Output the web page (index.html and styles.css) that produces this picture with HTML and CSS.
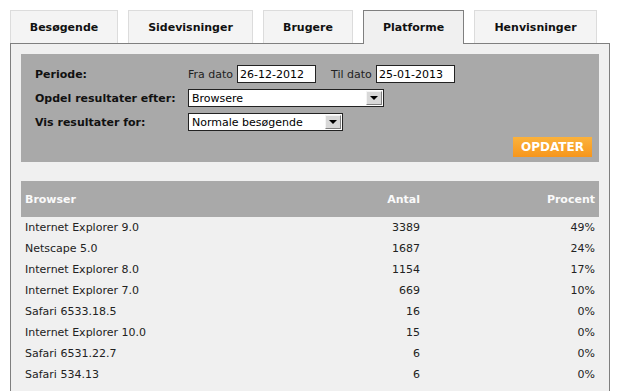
FILE: index.html
```html
<!DOCTYPE html>
<html lang="da">
<head>
    <meta charset="UTF-8">
    <meta name="viewport" content="width=device-width, initial-scale=1.0">
    <title>Statistik - Platforme</title>
    <link rel="stylesheet" href="styles.css">
</head>
<body>
    <div class="page">
        <div class="tabs">
            <a class="tab tab-visitors" href="#">Besøgende</a>
            <a class="tab tab-pageviews" href="#">Sidevisninger</a>
            <a class="tab tab-users" href="#">Brugere</a>
            <a class="tab tab-platforms active" href="#">Platforme</a>
            <a class="tab tab-referrers" href="#">Henvisninger</a>
        </div>

        <div class="panel">
            <form class="filter">
                <div class="filter-row">
                    <label class="filter-label">Periode:</label>
                    <div class="filter-field">
                        <span class="date-label">Fra dato</span>
                        <input class="date-input" type="text" value="26-12-2012">
                        <span class="date-label date-label-to">Til dato</span>
                        <input class="date-input" type="text" value="25-01-2013">
                    </div>
                </div>
                <div class="filter-row">
                    <label class="filter-label">Opdel resultater efter:</label>
                    <div class="select select-wide">
                        <span class="select-value">Browsere</span>
                        <span class="select-arrow"></span>
                    </div>
                </div>
                <div class="filter-row">
                    <label class="filter-label">Vis resultater for:</label>
                    <div class="select select-narrow">
                        <span class="select-value">Normale besøgende</span>
                        <span class="select-arrow"></span>
                    </div>
                </div>
                <div class="filter-actions">
                    <button class="update-button" type="button">OPDATER</button>
                </div>
            </form>

            <table class="stats">
                <thead>
                    <tr>
                        <th class="col-name">Browser</th>
                        <th class="col-num">Antal</th>
                        <th class="col-pct">Procent</th>
                    </tr>
                </thead>
                <tbody>
                    <tr><td>Internet Explorer 9.0</td><td class="num">3389</td><td class="num">49%</td></tr>
                    <tr><td>Netscape 5.0</td><td class="num">1687</td><td class="num">24%</td></tr>
                    <tr><td>Internet Explorer 8.0</td><td class="num">1154</td><td class="num">17%</td></tr>
                    <tr><td>Internet Explorer 7.0</td><td class="num">669</td><td class="num">10%</td></tr>
                    <tr><td>Safari 6533.18.5</td><td class="num">16</td><td class="num">0%</td></tr>
                    <tr><td>Internet Explorer 10.0</td><td class="num">15</td><td class="num">0%</td></tr>
                    <tr><td>Safari 6531.22.7</td><td class="num">6</td><td class="num">0%</td></tr>
                    <tr><td>Safari 534.13</td><td class="num">6</td><td class="num">0%</td></tr>
                </tbody>
            </table>
        </div>
    </div>
</body>
</html>
```

FILE: styles.css
```css
body {
    margin: 0;
    background-color: #fff;
    font-family: "DejaVu Sans", Verdana, sans-serif;
    font-size: 11px;
    color: #222;
}

.page {
    padding: 10px 0 0 10px;
}

/* tabs */

.tabs {
    display: flex;
    gap: 10px;
    height: 33px;
}

.tab {
    box-sizing: border-box;
    height: 33px;
    display: flex;
    align-items: center;
    justify-content: center;
    background-color: #f4f4f4;
    border: 1px solid #dcdcdc;
    border-bottom: none;
    color: #111;
    font-weight: bold;
    text-decoration: none;
}

.tab-visitors { width: 108px; }
.tab-pageviews { width: 125px; }
.tab-users { width: 90px; }
.tab-platforms { width: 101px; }
.tab-referrers { width: 123px; }

.tab.active {
    position: relative;
    z-index: 1;
    height: 34px;
    background-color: #f0f0f0;
    border-color: #7f7f7f;
}

/* panel */

.panel {
    box-sizing: border-box;
    width: 600px;
    min-height: 360px;
    padding: 10px;
    background-color: #f0f0f0;
    border: 1px solid #7f7f7f;
    border-bottom: none;
}

.filter {
    box-sizing: border-box;
    height: 108px;
    padding: 11px 7px 0 14px;
    background-color: #a9a9a9;
}

.filter-row {
    display: flex;
    align-items: center;
    height: 18px;
    margin-bottom: 6px;
}

.filter-label {
    width: 153px;
    font-weight: bold;
    color: #111;
}

.filter-field {
    display: flex;
    align-items: center;
}

.date-label {
    width: 49px;
    color: #222;
}

.date-label-to {
    width: 45px;
    margin-left: 15px;
}

.date-input {
    box-sizing: border-box;
    width: 79px;
    height: 18px;
    padding: 0 2px;
    border: 1px solid #222;
    font-family: inherit;
    font-size: 11px;
    color: #000;
    background-color: #fff;
}

.select {
    box-sizing: border-box;
    height: 18px;
    display: flex;
    align-items: center;
    background-color: #fff;
    border: 1px solid #222;
}

.select-wide { width: 196px; }
.select-narrow { width: 155px; }

.select-value {
    flex: 1;
    padding-left: 3px;
    color: #000;
}

.select-arrow {
    box-sizing: border-box;
    width: 16px;
    height: 14px;
    margin-right: 1px;
    display: flex;
    align-items: center;
    justify-content: center;
    background-color: #d8d8d8;
    border: 1px solid #f4f4f4;
    border-right-color: #808080;
    border-bottom-color: #808080;
}

.select-arrow::after {
    content: "";
    border-left: 4px solid transparent;
    border-right: 4px solid transparent;
    border-top: 4px solid #000;
}

.filter-actions {
    display: flex;
    justify-content: flex-end;
    margin-top: 5px;
}

.update-button {
    width: 79px;
    height: 20px;
    padding: 0;
    border: none;
    background: linear-gradient(#fbb23c, #f7961c);
    color: #fff;
    font-family: inherit;
    font-size: 12px;
    font-weight: bold;
    cursor: pointer;
}

/* stats table */

.stats {
    width: 578px;
    margin-top: 19px;
    border-collapse: collapse;
}

.stats th {
    height: 36px;
    padding: 0 4px;
    background-color: #a9a9a9;
    color: #fafafa;
    font-weight: bold;
    text-align: left;
}

.stats th.col-num,
.stats th.col-pct {
    text-align: right;
}

.stats th.col-name { width: 280px; }
.stats th.col-pct { width: 167px; }

.stats td {
    height: 21px;
    padding: 0 4px;
    color: #222;
}

.stats td.num {
    text-align: right;
}
```
